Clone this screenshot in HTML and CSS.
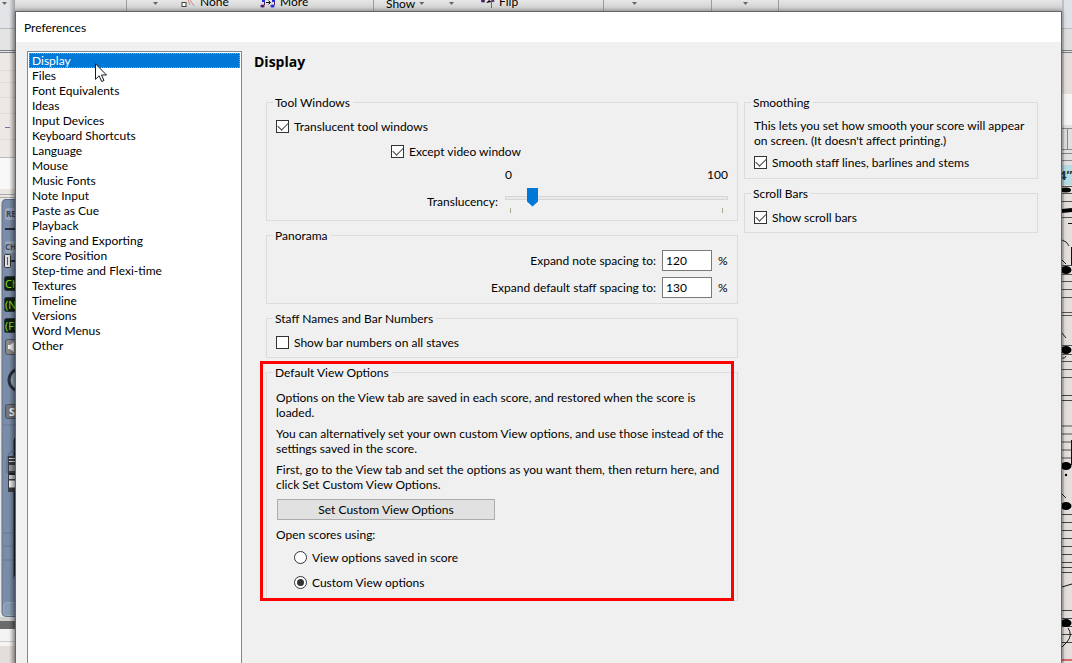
FILE: index.html
```html
<!DOCTYPE html>
<html lang="en">
<head>
<meta charset="utf-8">
<title>Preferences</title>
<link rel="stylesheet" href="styles.css">
</head>
<body>
<div class="app" aria-hidden="true">
  <div class="ribbon">
    <div class="group group-a"><i class="caret"></i></div>
    <div class="group group-b">
      <i class="caret"></i>
      <span class="tool tool-none"><svg width="15" height="12" viewBox="0 0 15 12"><rect x="1" y="2.500" width="4" height="4" fill="#fff" stroke="#444"/><path d="M7 0l2 5M9 0l4 6" stroke="#d08a8a" fill="none"/></svg>None</span>
      <span class="tool"><svg width="16" height="12" viewBox="0 0 16 12"><path d="M4.500 0v5M14.500 0v5" stroke="#50206a" fill="none"/><ellipse cx="2.500" cy="6" rx="2.200" ry="1.600" fill="#50206a"/><ellipse cx="12.500" cy="6" rx="2.200" ry="1.600" fill="#2828d8"/><path d="M12 0h3v2h-3zM2 0h3v2H2z" fill="#2828d8"/><path d="M6 2.500h4M8.500 .500l2 2-2 2" stroke="#111" fill="none"/></svg>More</span>
    </div>
    <div class="group group-c">
      <span class="tool show">Show<i class="caret"></i></span>
      <i class="caret"></i>
      <span class="tool"><svg width="15" height="12" viewBox="0 0 15 12"><ellipse cx="3" cy="1" rx="2" ry="1.500" fill="#50206a"/><path d="M6 3l3-3 3 2z" fill="#111"/><ellipse cx="13" cy="1" rx="1.500" ry="1" fill="#50206a"/><path d="M11.500 0v8" stroke="#7a5a90"/></svg>Flip</span>
    </div>
    <div class="group group-d"><i class="caret"></i></div>
    <div class="group group-e"><i class="caret"></i></div>
  </div>
  <svg class="strip strip-left" width="15" height="663" viewBox="0 0 15 663">
    <defs><linearGradient id="edge"><stop offset="0" stop-opacity="0"/><stop offset="1" stop-opacity=".3"/></linearGradient></defs>
    <rect width="15" height="663" fill="#e9e6e3"/>
    <rect width="15" height="28" fill="#e2e4e7"/>
    <path d="M2 2h5l-2.500 3z" fill="#666"/>
    <path d="M0 28.500h15" stroke="#b8bcc0"/>
    <rect y="29" width="15" height="22" fill="#e4e4e4"/>
    <path d="M0 50.500h15M0 52.500h15" stroke="#7b8087"/>
    <rect y="53" width="15" height="105" fill="#eee8e5"/>
    <path d="M0 70.500h15M0 82.500h15M0 97.500h15M0 113.500h15M0 139.500h15" stroke="#e2dad7"/>
    <path d="M5 127.500h5" stroke="#6d75b0"/>
    <rect y="158" width="15" height="31" fill="#f8f8f8"/>
    <path d="M0 157.500h15" stroke="#bbb"/><path d="M0 194.500h15M0 197.500h15" stroke="#aaa"/>
    <path d="M15 199H6q-4 0-4 5v408q0 4 4 4h9z" fill="#7b8ca8"/>
    <path d="M15 199.500H6q-4 0-4 5v408q0 4 4 4h9" fill="none" stroke="#5a6e8c"/>
    <rect x="5" y="208" width="10" height="12" rx="2" fill="#98a6bb"/>
    <text x="6" y="217" class="tag">RE</text>
    <path d="M5 229h10" stroke="#222b38" stroke-width="2"/>
    <rect x="5" y="241" width="10" height="12" rx="2" fill="#98a6bb"/>
    <text x="5" y="250" class="tag">CH</text>
    <path d="M4 261h11" stroke="#222b38" stroke-width="2"/>
    <rect x="4.500" y="254.500" width="6" height="13" rx="1" fill="#ddd" stroke="#333"/><path d="M7.500 257v8" stroke="#555"/>
    <g fill="#12200f" stroke="#2b3644"><rect x="4.500" y="276.500" width="14" height="14" rx="2"/><rect x="4.500" y="297.500" width="14" height="14" rx="2"/><rect x="4.500" y="318.500" width="14" height="14" rx="2"/></g>
    <text x="5" y="288" class="lcd">Ch</text><text x="5" y="309" class="lcd">(N</text><text x="5" y="330" class="lcd">(Fl</text>
    <rect x="5.500" y="339.500" width="14" height="15" rx="2" fill="#888" stroke="#49525f"/>
    <path d="M8 345h2l4-3v10l-4-3H8z" fill="#eee"/>
    <circle cx="20" cy="380" r="11" fill="#9cabb9" stroke="#26303e" stroke-width="3"/>
    <rect x="5.500" y="404.500" width="14" height="14" rx="2" fill="#71757b" stroke="#49525f"/>
    <text x="9" y="416" class="solo">S</text>
    <path d="M2 425h13M2 533h13M2 546h13M2 560h13" stroke="#667a97"/>
    <path d="M13.500 440v138h2" fill="none" stroke="#4d607c"/><rect x="14" y="438" width="2" height="138" fill="#202938"/>
    <path d="M7 473v-12q0-10 8-10" fill="none" stroke="#566a87"/>
    <rect x="8" y="456" width="8" height="36" fill="#393d43"/>
    <path d="M9 458.500h6M9 461.500h6" stroke="#ddd"/><path d="M9 468h6" stroke="#999" stroke-width="6"/><path d="M9 474h6" stroke="#111"/><path d="M9 477h6" stroke="#ccc" stroke-width="4"/><path d="M9 484h6" stroke="#eee" stroke-width="7"/>
    <rect x="3.500" y="602.500" width="13" height="13" rx="3" fill="#8a9cb5" stroke="#9cacbf"/>
    <rect y="617" width="15" height="4" fill="#cfcfcf"/><rect y="621" width="15" height="8" fill="#6b6b6b"/>
    <rect y="629" width="15" height="17" fill="#f4f4f4"/><path d="M0 641.500h15" stroke="#ccc"/><rect y="646" width="15" height="17" fill="#e4dedb"/>
    <rect x="9" width="6" height="663" fill="url(#edge)"/>
  </svg>
  <svg class="strip strip-right" width="10" height="663" viewBox="0 0 10 663">
    <rect width="10" height="663" fill="#e4dfdc"/>
    <rect width="10" height="28" fill="#dfe2e8"/>
    <path d="M0 28.500h10" stroke="#b8bcc0"/><rect y="29" width="10" height="21" fill="#dedede"/>
    <path d="M0 50.500h10M0 52.500h10" stroke="#7b8087"/>
    <rect y="94" width="10" height="31" fill="#f5f5f5"/><rect y="125" width="10" height="39" fill="#e0e0e0"/>
    <path d="M0 128.500h10M0 149.500h10M5.500 128v21M0 153.500h10M0 160.500h10" stroke="#888"/>
    <rect y="165" width="10" height="20" fill="#b6dce2"/>
    <text x="-3" y="180" class="inch">4”</text>
    <path d="M0 186.500h10M0 193.500h10M0 201.500h10M0 217.500h10M0 265.500h10M0 274.500h10M0 281.500h10M0 289.500h10M0 297.500h10M0 312.500h10M0 315.500h10M0 345.500h10M0 354.500h10M0 361.500h10M0 369.500h10M0 377.500h10" stroke="#555"/>
    <path d="M0 211l10-1" stroke="#000" stroke-width="4"/>
    <path d="M0 240q5 1 7 6M0 260l4 4M0 333l4 5M0 494l4 4M0 358q3 1 4-2" stroke="#222" fill="none"/>
    <path d="M0 395.500h10M0 400.500h10M0 514.500h10M0 522.500h10M0 530.500h10M0 538.500h10M0 546.500h10M0 554.500h10M0 562.500h10M0 567.500h10M0 572.500h10M0 610.500h10M0 618.500h10M0 626.500h10M0 634.500h10M0 642.500h10" stroke="#444"/>
    <path d="M0 426h10M0 434h10M0 442h10M0 450h10M0 458h10" stroke="#999" stroke-width="2"/>
    <path d="M9.500 247v18M9.500 440v25M6 223.500h4" stroke="#111"/>
    <g fill="#000"><ellipse cx="4" cy="190" rx="5" ry="2.500"/><ellipse cx="4" cy="270" rx="5.500" ry="4"/><ellipse cx="4" cy="350" rx="5.500" ry="4"/><ellipse cx="4" cy="466" rx="5.500" ry="4"/><circle cx="4" cy="475" r="1.200"/><ellipse cx="4" cy="506" rx="5.500" ry="4"/><ellipse cx="4" cy="623" rx="5.500" ry="4"/></g>
    <path d="M0 587l10-3" stroke="#111"/><path d="M6 628q5 7-1 14l-5 5" stroke="#111" fill="none"/>
    <path d="M0 660h10" stroke="#d66" stroke-width="2"/>
    <rect width="2" height="663" opacity=".15"/>
  </svg>
</div>

<main class="dialog">
  <header class="titlebar">Preferences</header>
  <div class="dialog-body">
    <select class="pages" size="20" aria-label="Preference pages">
      <option selected>Display</option><option>Files</option><option>Font Equivalents</option><option>Ideas</option><option>Input Devices</option><option>Keyboard Shortcuts</option><option>Language</option><option>Mouse</option><option>Music Fonts</option><option>Note Input</option><option>Paste as Cue</option><option>Playback</option><option>Saving and Exporting</option><option>Score Position</option><option>Step-time and Flexi-time</option><option>Textures</option><option>Timeline</option><option>Versions</option><option>Word Menus</option><option>Other</option>
    </select>
    <section class="page">
      <h1>Display</h1>
      <div class="columns">
        <div class="column">
          <fieldset>
            <legend>Tool Windows</legend>
            <div class="content tools">
              <label class="check"><input type="checkbox" checked>Translucent tool windows</label>
              <label class="check indent"><input type="checkbox" checked>Except video window</label>
              <div class="translucency">
                <div class="scale"><span>0</span><span>100</span></div>
                <label for="translucency">Translucency:</label>
                <div class="slider">
                  <input type="range" id="translucency" min="0" max="100" value="10">
                  <div class="ticks"><i></i><i></i></div>
                </div>
              </div>
            </div>
          </fieldset>
          <fieldset>
            <legend>Panorama</legend>
            <div class="content panorama">
              <div class="field"><label for="note">Expand note spacing to:</label><input type="text" id="note" value="120"><span class="unit">%</span></div>
              <div class="field"><label for="staff">Expand default staff spacing to:</label><input type="text" id="staff" value="130"><span class="unit">%</span></div>
            </div>
          </fieldset>
          <fieldset>
            <legend>Staff Names and Bar Numbers</legend>
            <div class="content"><label class="check"><input type="checkbox">Show bar numbers on all staves</label></div>
          </fieldset>
          <div class="highlighted">
            <fieldset>
              <legend>Default View Options</legend>
              <div class="content defaults">
                <p>Options on the View tab are saved in each score, and restored when the score is<br>loaded.</p>
                <p>You can alternatively set your own custom View options, and use those instead of the<br>settings saved in the score.</p>
                <p>First, go to the View tab and set the options as you want them, then return here, and<br>click Set Custom View Options.</p>
                <button type="button">Set Custom View Options</button>
                <div class="choices" role="radiogroup" aria-labelledby="open-using">
                  <span id="open-using">Open scores using:</span>
                  <label class="check choice"><input type="radio" name="open">View options saved in score</label>
                  <label class="check choice"><input type="radio" name="open" checked>Custom View options</label>
                </div>
              </div>
            </fieldset>
            <div class="highlight"></div>
          </div>
        </div>
        <div class="column">
          <fieldset>
            <legend>Smoothing</legend>
            <div class="content smoothing">
              <p>This lets you set how smooth your score will appear<br>on screen. (It doesn't affect printing.)</p>
              <label class="check"><input type="checkbox" checked>Smooth staff lines, barlines and stems</label>
            </div>
          </fieldset>
          <fieldset>
            <legend>Scroll Bars</legend>
            <div class="content"><label class="check"><input type="checkbox" checked>Show scroll bars</label></div>
          </fieldset>
        </div>
      </div>
    </section>
  </div>
</main>
<svg class="pointer" width="13" height="20" viewBox="0 0 13 20" aria-hidden="true"><path d="M.5.800v15.500l3.600-3.500 2.600 5.700 2.300-1-2.500-5.500h5z" fill="#fff" stroke="#111827"/></svg>
</body>
</html>
```
FILE: styles.css
```css
* { box-sizing: border-box; }
body {
  margin: 0;
  height: 100vh;
  overflow: hidden;
  position: relative;
  display: flex;
  font: 12px/15px Lato, "Open Sans", sans-serif;
  color: #000;
}
input, button, select { font: inherit; color: inherit; }
p { margin: 0; white-space: nowrap; }

/* application behind the dialog */
.app { position: absolute; inset: 0; overflow: hidden; background: #ded8d6; }
.ribbon {
  display: flex;
  height: 12px;
  overflow: hidden;
  background: linear-gradient(#e6e6e6, #d6d6d6 60%, #bcbcbc);
}
.group { display: flex; align-items: flex-start; flex: none; border-right: 1px solid #9a9da2; }
.group-a { width: 127px; padding-left: 2px; }
.group-b { width: 247px; padding-left: 26px; }
.group-c { width: 230px; padding-left: 12px; gap: 26px; }
.group-d { width: 108px; padding-left: 28px; }
.group-e { width: 67px; padding-left: 31px; }
.caret {
  flex: none;
  width: 5px;
  height: 3px;
  margin-top: 2px;
  background: #666;
  clip-path: polygon(0 0, 100% 0, 50% 100%);
}
.tool { display: flex; gap: 4px; height: 12px; line-height: 4px; }
.tool-none { width: 79px; margin-left: 23px; }
.show { width: 37px; line-height: 8px; justify-content: space-between; }
.strip { position: absolute; top: 0; }
.strip-left { left: 0; }
.strip-right { right: 0; }
.tag { font: bold 8px "Open Sans", sans-serif; fill: #3b4658; }
.lcd { font: 11px "Open Sans", sans-serif; fill: #8be32a; }
.solo { font: bold 11px "Open Sans", sans-serif; fill: #fff; }
.inch { font: bold 13px "Open Sans", sans-serif; fill: #1c3a40; }

/* dialog */
.dialog {
  position: relative;
  flex: 1;
  display: flex;
  flex-direction: column;
  margin: 11px 10px 0 15px;
  border: 1px solid #62666a;
  border-bottom: 0;
  background: #f0f0f0;
  box-shadow: 0 0 5px rgba(0, 0, 0, .35);
}
.titlebar { background: #fff; height: 30px; padding: 8px; }
.dialog-body { flex: 1; display: flex; gap: 12px; padding: 9px 23px 0 11px; min-height: 0; }
.pages {
  appearance: none;
  flex: none;
  width: 215px;
  height: 100%;
  padding: 1px;
  border: 1px solid #828790;
  border-bottom: 0;
  border-radius: 0;
  background: #fff;
  outline: 0;
  overflow: hidden;
}
.pages option { padding: 0 3px; height: 15px; min-height: 15px; line-height: 15px; }
.pages option:checked {
  background: #0078d7 linear-gradient(#0078d7, #0078d7);
  color: #fff;
  outline: 1px dotted #ff8728;
  outline-offset: -1px;
}
.page { flex: 1; min-width: 0; }
h1 { margin: 0; font: 700 14px/22px "Open Sans", sans-serif; }
.columns {
  display: grid;
  grid-template-columns: minmax(0, 472fr) minmax(0, 294fr);
  gap: 6px;
  align-items: start;
  margin-top: 22px;
  padding-left: 12px;
}
.column { display: grid; gap: 7px; min-width: 0; }
fieldset { min-width: 0; margin: 0; padding: 0 6px; border: 1px solid #dcdcdc; }
legend { padding: 0 3px 0 2px; }
.content { padding: 9px 3px 7px; display: grid; justify-items: start; }

.check { display: flex; align-items: center; gap: 5px; }
.check input {
  appearance: none;
  width: 13px;
  height: 13px;
  margin: 0;
  border: 1px solid #333;
  background: #fff;
  display: grid;
  place-items: center;
}
.check input[type=checkbox]:checked::before {
  content: "";
  width: 9px;
  height: 5px;
  margin-bottom: 3px;
  border: solid #444;
  border-width: 0 0 1px 1px;
  transform: rotate(-45deg);
}
.check input[type=radio] { border-radius: 50%; }
.check input[type=radio]:checked::before {
  content: "";
  width: 7px;
  height: 7px;
  border-radius: 50%;
  background: #333;
}

.tools { padding: 9px 3px 7px; gap: 10px; }
.indent { margin-left: 115px; }
.translucency {
  justify-self: stretch;
  display: grid;
  grid-template-columns: 1fr 223px;
  column-gap: 7px;
  row-gap: 6px;
  margin-top: -2px;
}
.translucency label { justify-self: end; padding-top: 6px; }
.scale { grid-column: 2; display: flex; justify-content: space-between; }
.slider { display: grid; gap: 1px; }
.slider input { appearance: none; width: 100%; height: 19px; margin: 0; background: none; }
.slider input::-webkit-slider-runnable-track { height: 4px; border: 1px solid #d6d6d6; background: #e7eaea; }
.slider input::-webkit-slider-thumb {
  appearance: none;
  width: 11px;
  height: 19px;
  margin-top: -9px;
  background: #0078d7;
  clip-path: polygon(0 0, 100% 0, 100% 74%, 50% 100%, 0 74%);
}
.ticks { display: flex; justify-content: space-between; height: 5px; padding: 0 5px; }
.ticks i { width: 1px; background: #a8a890; }

.panorama { padding: 7px 3px 5px; gap: 6px; justify-items: end; }
.field { display: flex; align-items: center; gap: 6px; }
.field input { width: 50px; height: 21px; padding: 0 3px; border: 1px solid #7a7a7a; border-radius: 0; background: #fff; }
.unit { width: 10px; }

.highlighted { position: relative; }
.highlight { position: absolute; inset: -4px 4px 0 -6px; border: 3px solid #f00; pointer-events: none; }
.defaults { padding: 10px 3px; gap: 6px; }
button {
  width: 218px;
  height: 21px;
  margin: 1px;
  padding: 0;
  border: 1px solid #adadad;
  border-radius: 0;
  background: #e1e1e1;
}
.choices { display: grid; gap: 10px; }
.choices span { margin-bottom: -2px; }
.choice { margin-left: 18px; }
.smoothing { padding: 8px 3px; gap: 7px; }
.pointer { position: absolute; left: 95px; top: 63px; }
```
